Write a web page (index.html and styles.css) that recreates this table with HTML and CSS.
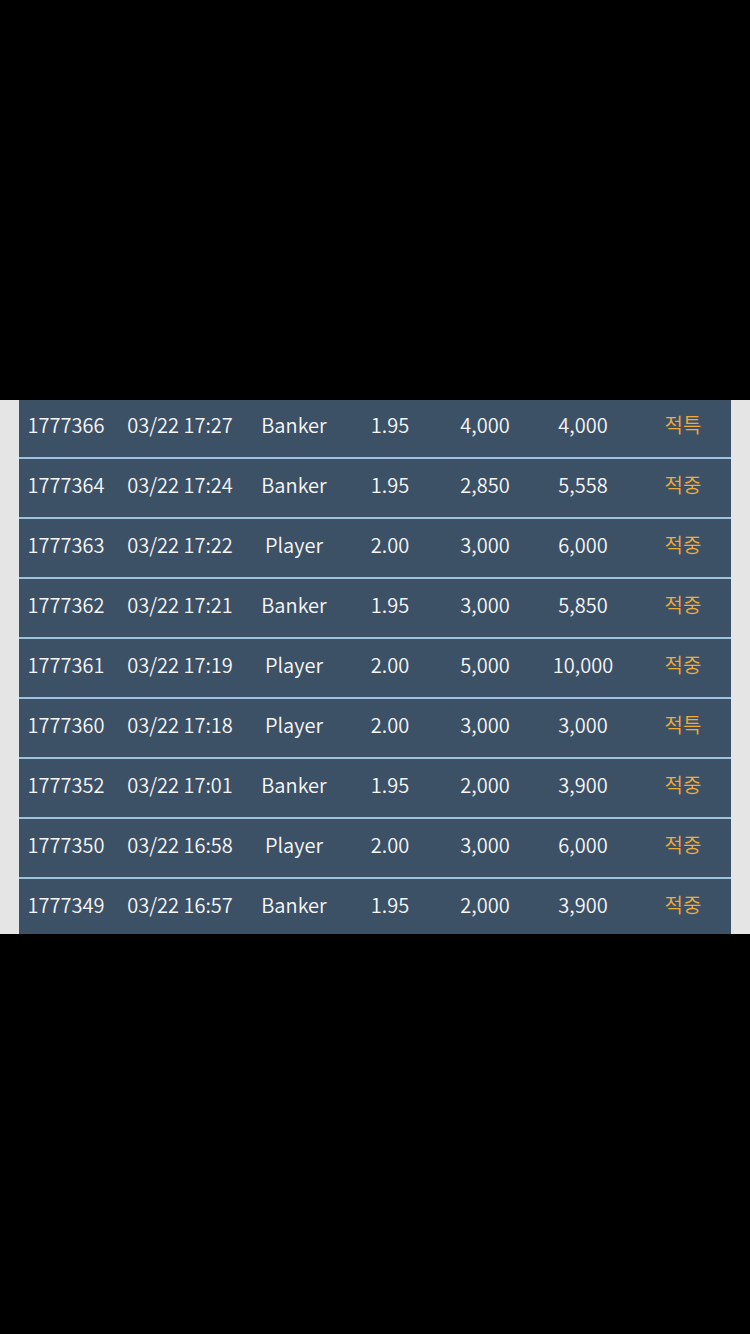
FILE: index.html
```html
<!DOCTYPE html>
<html>
<head>
<meta charset="utf-8">
<title>배팅내역</title>
<link rel="stylesheet" href="styles.css">
</head>
<body>
	<div class="top"></div>
	<div class="list">
		<table class="bets">
			<colgroup>
				<col class="c-id"><col class="c-date"><col class="c-type"><col class="c-odds">
				<col class="c-bet"><col class="c-win"><col class="c-res">
			</colgroup>
			<tr><td>1777366</td><td>03/22 17:27</td><td>Banker</td><td>1.95</td><td>4,000</td><td>4,000</td><td class="res">적특</td></tr>
			<tr><td>1777364</td><td>03/22 17:24</td><td>Banker</td><td>1.95</td><td>2,850</td><td>5,558</td><td class="res">적중</td></tr>
			<tr><td>1777363</td><td>03/22 17:22</td><td>Player</td><td>2.00</td><td>3,000</td><td>6,000</td><td class="res">적중</td></tr>
			<tr><td>1777362</td><td>03/22 17:21</td><td>Banker</td><td>1.95</td><td>3,000</td><td>5,850</td><td class="res">적중</td></tr>
			<tr><td>1777361</td><td>03/22 17:19</td><td>Player</td><td>2.00</td><td>5,000</td><td>10,000</td><td class="res">적중</td></tr>
			<tr><td>1777360</td><td>03/22 17:18</td><td>Player</td><td>2.00</td><td>3,000</td><td>3,000</td><td class="res">적특</td></tr>
			<tr><td>1777352</td><td>03/22 17:01</td><td>Banker</td><td>1.95</td><td>2,000</td><td>3,900</td><td class="res">적중</td></tr>
			<tr><td>1777350</td><td>03/22 16:58</td><td>Player</td><td>2.00</td><td>3,000</td><td>6,000</td><td class="res">적중</td></tr>
			<tr><td>1777349</td><td>03/22 16:57</td><td>Banker</td><td>1.95</td><td>2,000</td><td>3,900</td><td class="res">적중</td></tr>
		</table>
	</div>
	<div class="bottom"></div>
</body>
</html>
```
FILE: styles.css
```css
html, body {
	margin: 0;
	padding: 0;
	background: #000;
}

.top {
	height: 400px;
}

.list {
	height: 534px;
	overflow: hidden;
	background: #e5e5e5;
	padding: 0 19px;
}

.bets {
	width: 712px;
	margin-top: -1px;
	border-collapse: collapse;
	table-layout: fixed;
	font-family: "Noto Sans CJK KR", "Noto Sans", sans-serif;
	font-size: 20px;
	font-weight: 350;
	color: #f6f7f9;
}

.bets td {
	height: 50px;
	padding: 0 0 8px;
	text-align: center;
	background: #3d5166;
	border-bottom: 2px solid #9ec3df;
}

.bets .res {
	color: #f0ac38;
}

.c-id { width: 94px; }
.c-date { width: 134px; }
.c-type { width: 94px; }
.c-odds { width: 98px; }
.c-bet { width: 92px; }
.c-win { width: 104px; }
.c-res { width: 96px; }
```
